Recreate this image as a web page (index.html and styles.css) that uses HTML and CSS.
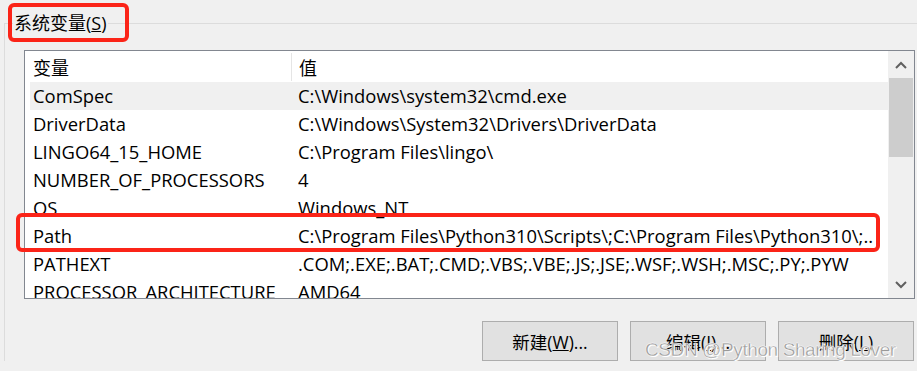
FILE: index.html
```html
<!DOCTYPE html>
<html lang="zh-CN">
<head>
    <meta charset="UTF-8">
    <title>系统变量</title>
    <link rel="stylesheet" href="styles.css">
</head>
<body>
    <div class="page">
        <fieldset class="group">
            <legend class="group-title">系统变量(<u>S</u>)</legend>

            <div class="list">
                <div class="list-body">
                    <div class="list-head">
                        <div class="cell name">变量</div>
                        <div class="cell value">值</div>
                    </div>
                    <div class="row selected">
                        <div class="cell name">ComSpec</div>
                        <div class="cell value">C:\Windows\system32\cmd.exe</div>
                    </div>
                    <div class="row">
                        <div class="cell name">DriverData</div>
                        <div class="cell value">C:\Windows\System32\Drivers\DriverData</div>
                    </div>
                    <div class="row">
                        <div class="cell name">LINGO64_15_HOME</div>
                        <div class="cell value">C:\Program Files\lingo\</div>
                    </div>
                    <div class="row">
                        <div class="cell name">NUMBER_OF_PROCESSORS</div>
                        <div class="cell value">4</div>
                    </div>
                    <div class="row">
                        <div class="cell name">OS</div>
                        <div class="cell value">Windows_NT</div>
                    </div>
                    <div class="row">
                        <div class="cell name">Path</div>
                        <div class="cell value">C:\Program Files\Python310\Scripts\;C:\Program Files\Python310\;..</div>
                    </div>
                    <div class="row">
                        <div class="cell name">PATHEXT</div>
                        <div class="cell value">.COM;.EXE;.BAT;.CMD;.VBS;.VBE;.JS;.JSE;.WSF;.WSH;.MSC;.PY;.PYW</div>
                    </div>
                    <div class="row">
                        <div class="cell name">PROCESSOR_ARCHITECTURE</div>
                        <div class="cell value">AMD64</div>
                    </div>
                </div>

                <div class="scrollbar">
                    <div class="scroll-btn">
                        <svg width="12" height="8" viewBox="0 0 12 8"><path d="M1 7 L6 2 L11 7" fill="none" stroke="#606060" stroke-width="2"/></svg>
                    </div>
                    <div class="scroll-thumb"></div>
                    <div class="scroll-track"></div>
                    <div class="scroll-btn">
                        <svg width="12" height="8" viewBox="0 0 12 8"><path d="M1 1 L6 6 L11 1" fill="none" stroke="#606060" stroke-width="2"/></svg>
                    </div>
                </div>
            </div>

            <div class="actions">
                <button>新建(<u>W</u>)...</button>
                <button>编辑(<u>I</u>)...</button>
                <button>删除(<u>L</u>)</button>
            </div>
        </fieldset>

        <!-- annotation boxes drawn over the dialog -->
        <div class="mark mark-title"></div>
        <div class="mark mark-path"></div>

        <div class="watermark">CSDN @Python Sharing Lover</div>
    </div>
</body>
</html>
```

FILE: styles.css
```css
body { margin: 0; background-color: #f0f0f0; font-family: "Open Sans", "Noto Sans CJK SC", sans-serif; color: #000; }
.page { position: relative; width: 917px; height: 371px; overflow: hidden; }

.group { margin: 11px 0 0 4px; padding: 0; min-width: 0; border: none; border-top: 1px solid #dcdcdc; border-left: 1px solid #dcdcdc; }
.group-title { margin-left: 8px; padding: 0 1px; font-size: 18px; line-height: 24px; }

.list { display: flex; margin: 15px 2px 0 19px; height: 247px; border: 1px solid #828790; background-color: #fff; }
.list-body { flex: 1; padding-left: 5px; overflow: hidden; }
.list-head, .row { display: grid; grid-template-columns: 261px 1fr; }
.list-head { height: 31px; align-items: center; }
.list-head .cell { font-size: 18px; }
.list-head .value { border-left: 1px solid #e5e5e5; height: 28px; display: flex; align-items: center; padding-left: 6px; }
.row { height: 28px; box-sizing: border-box; padding-bottom: 2px; align-items: center; }
.row.selected { background-color: #f0f0f0; }
.cell { font-size: 18.4px; white-space: nowrap; overflow: hidden; }
.cell.name { padding-left: 3px; }
.cell.value { padding-left: 7px; }

.scrollbar { width: 26px; display: flex; flex-direction: column; background-color: #f0f0f0; }
.scroll-btn { height: 27px; display: flex; align-items: center; justify-content: center; }
.scroll-thumb { height: 79px; margin: 0 1px; background-color: #cdcdcd; }
.scroll-track { flex: 1; }

.actions { display: flex; justify-content: flex-end; gap: 12px; margin: 22px 3px 0 0; }
.actions button { width: 136px; height: 40px; border: 1px solid #adadad; background-color: #e1e1e1; font-family: inherit; font-size: 17.5px; color: #000; padding: 0; }

.mark { position: absolute; border: 4px solid #fb2418; border-radius: 6px; }
.mark-title { left: 8px; top: 3px; width: 113px; height: 31px; }
.mark-path { left: 16px; top: 213px; width: 856px; height: 31px; }

.watermark { position: absolute; left: 645px; top: 339px; white-space: nowrap; font-family: "Liberation Sans", sans-serif; font-size: 19px; letter-spacing: -0.4px; color: rgba(110, 110, 110, 0.7); -webkit-text-stroke: 0.3px #fff; text-shadow: 0 0 1px #fff, 1px 1px 0 #fff; }
```
